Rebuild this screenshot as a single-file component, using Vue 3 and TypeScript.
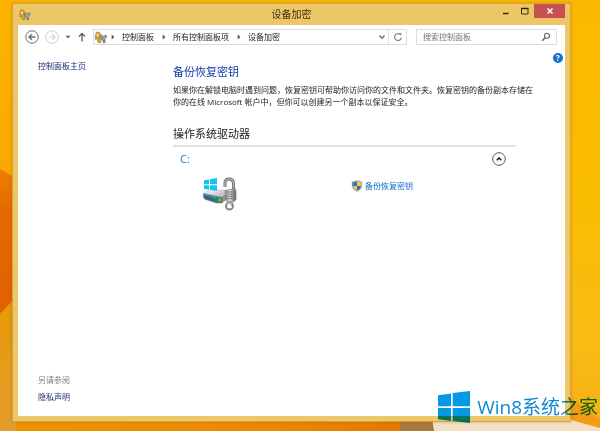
<script setup lang="ts">
import { ref } from 'vue'

const crumbs: string[] = ['控制面板', '所有控制面板项', '设备加密']
const query = ref('')
const expanded = ref(true)
</script>

<template>
  <div class="desktop">
    <svg class="wallpaper" viewBox="0 0 600 431" preserveAspectRatio="none" aria-hidden="true">
      <defs>
        <linearGradient id="base" x1="0" y1="0" x2="0" y2="1">
          <stop offset="0" stop-color="#fbb800" />
          <stop offset="0.45" stop-color="#fbbd00" />
          <stop offset="0.8" stop-color="#f9bb14" />
          <stop offset="1" stop-color="#f6ae16" />
        </linearGradient>
        <linearGradient id="left" x1="0" y1="0" x2="0" y2="1">
          <stop offset="0" stop-color="#fdb400" />
          <stop offset="1" stop-color="#f9a602" />
        </linearGradient>
        <linearGradient id="flame" x1="0" y1="0" x2="0" y2="1">
          <stop offset="0" stop-color="#ee7d00" />
          <stop offset="0.3" stop-color="#e66a00" />
          <stop offset="1" stop-color="#e05f04" />
        </linearGradient>
        <linearGradient id="low" x1="0" y1="0" x2="0" y2="1">
          <stop offset="0" stop-color="#e89a06" />
          <stop offset="1" stop-color="#e49c2c" />
        </linearGradient>
        <linearGradient id="floor" x1="0" y1="0" x2="1" y2="0">
          <stop offset="0" stop-color="#ee9300" />
          <stop offset="0.6" stop-color="#ec8a00" />
          <stop offset="1" stop-color="#e57800" />
        </linearGradient>
      </defs>
      <path d="M0 0H600V431H0Z" fill="url(#base)" />
      <path d="M0 0H16V210H0Z" fill="url(#left)" />
      <path d="M0 169L16 178V300L0 314Z" fill="url(#flame)" />
      <path d="M0 314L16 297V431H0Z" fill="url(#low)" />
      <path d="M16 418H402V431H16Z" fill="url(#floor)" />
      <path d="M399 418H436V431H401Z" fill="#a8783c" />
      <path d="M432 418H571L600 427V431H434Z" fill="#f3dfc4" />
      <path d="M571 398L600 420V428L571 420Z" fill="#f39b12" />
    </svg>

    <svg class="symbols" aria-hidden="true">
      <symbol id="keys" viewBox="0 0 14 14">
        <path d="M2 1.5C3.6.4 6 1.2 6.3 3.2L6 6.5 7 12 5.5 13 4.6 11.8 3.8 12.6 3 8 1.2 9.5.8 5Z" fill="#d7a035" stroke="#8f7133" stroke-width=".6" />
        <path d="M2.2 3.2L4.6 2.8V5.4L2.4 5.8Z" fill="#f6dc7c" />
        <path d="M6 5.5L8 4 9.6 5.8 12.2 4.2 13.4 6.2 11.4 8.4 11.6 12.4 9.7 13 8.6 9.8 6.8 8.7Z" fill="#878c88" stroke="#64706f" stroke-width=".5" />
        <path d="M7.6 5.8L9 7.2M10.8 6.2L9.8 9.6" stroke="#d0dce0" stroke-width=".8" />
        <path d="M10.8 5.2L12.7 5.1 12.2 7Z" fill="#5a92ba" />
      </symbol>
    </svg>

    <main class="window">
      <header class="titlebar">
        <svg class="app-icon"><use href="#keys" /></svg>
        <h1>设备加密</h1>
        <div class="controls">
          <button class="control" type="button" aria-label="最小化">
            <svg viewBox="0 0 10 10"><path d="M2 7.5H7.5" stroke="#2e2614" stroke-width="1.5" /></svg>
          </button>
          <button class="control" type="button" aria-label="最大化">
            <svg viewBox="0 0 10 10"><path d="M1.5 2.5H8V8H1.5Z" fill="none" stroke="#3c321b" /><path d="M1 2.5H8.5" stroke="#2e2614" stroke-width="1.5" /></svg>
          </button>
          <button class="control close" type="button" aria-label="关闭">
            <svg viewBox="0 0 10 10"><path d="M2.5 2.5L7.5 7.5M7.5 2.5L2.5 7.5" stroke="#fff" stroke-width="1.5" /></svg>
          </button>
        </div>
      </header>

      <div class="client">
        <nav class="navbar" aria-label="导航">
          <button class="round" type="button" aria-label="后退">
            <svg viewBox="0 0 14 14" fill="none" stroke="#6b6b6b"><circle cx="7" cy="7" r="6.2" /><path d="M10.4 7H4M6.8 4.2L4 7 6.8 9.8" stroke-width="1.4" /></svg>
          </button>
          <button class="round" type="button" aria-label="前进" disabled>
            <svg viewBox="0 0 14 14" fill="none" stroke="#cfcfcf"><circle cx="7" cy="7" r="6.2" /><path d="M3.6 7H10M7.2 4.2L10 7 7.2 9.8" stroke-width="1.2" /></svg>
          </button>
          <button class="recent" type="button" aria-label="最近的位置">
            <svg viewBox="0 0 6 6"><path d="M.5 1.8H5.5L3 4.6Z" fill="#666" /></svg>
          </button>
          <button class="up" type="button" aria-label="上移">
            <svg viewBox="0 0 10 10" fill="none" stroke="#5c5c5c" stroke-width="1.3"><path d="M5 9.5V1.5M2 4.5L5 1.4 8 4.5" /></svg>
          </button>
          <div class="address">
            <svg class="address-icon"><use href="#keys" /></svg>
            <ol class="crumbs">
              <li v-for="crumb in crumbs" :key="crumb">
                <svg class="arrow" viewBox="0 0 4 6"><path d="M.7.6L3.4 3 .7 5.4Z" fill="#555" /></svg>
                <a href="#">{{ crumb }}</a>
              </li>
            </ol>
            <button class="drop" type="button" aria-label="以前的位置">
              <svg viewBox="0 0 8 8"><path d="M1.5 2.5L4 5.3 6.5 2.5" fill="none" stroke="#6a6a6a" stroke-width="1.3" /></svg>
            </button>
            <button class="refresh" type="button" aria-label="刷新">
              <svg viewBox="0 0 10 10"><path d="M7.1 2.4A3.4 3.4 0 1 0 8.4 5.6" fill="none" stroke="#777" stroke-width="1.1" /><path d="M5.6 1H8.2V3.7Z" fill="#777" /></svg>
            </button>
          </div>
          <label class="search">
            <input v-model="query" type="search" placeholder="搜索控制面板" aria-label="搜索控制面板" />
            <svg viewBox="0 0 10 10" fill="none" stroke="#666"><circle cx="6" cy="3.8" r="2.5" stroke-width="1.1" /><path d="M4.2 5.7L1.2 8.8" stroke-width="1.5" /></svg>
          </label>
        </nav>

        <div class="body">
          <aside class="sidebar">
            <a href="#">控制面板主页</a>
            <div class="related">
              <h2>另请参阅</h2>
              <a href="#">隐私声明</a>
            </div>
          </aside>

          <section class="content">
            <h2 class="heading">备份恢复密钥</h2>
            <p class="intro">
              如果你在解锁电脑时遇到问题，恢复密钥可帮助你访问你的文件和文件夹。恢复密钥的备份副本存储在<br />你的在线 Microsoft 帐户中，但你可以创建另一个副本以保证安全。
            </p>
            <h3 class="group">操作系统驱动器</h3>
            <div class="drive-head">
              <span>C:</span>
              <button class="round" type="button" aria-label="折叠" :aria-expanded="expanded" @click="expanded = !expanded">
                <svg viewBox="0 0 14 14" fill="none"><circle cx="7" cy="7" r="6.3" stroke="#555" /><path d="M4.8 8.2L7 6 9.2 8.2" stroke="#222" stroke-width="1.6" /></svg>
              </button>
            </div>
            <div v-if="expanded" class="drive">
              <svg class="drive-icon" viewBox="0 0 34 34">
                <defs>
                  <linearGradient id="top" x1="0" y1="0" x2="1" y2="1">
                    <stop offset="0" stop-color="#fafafa" />
                    <stop offset="1" stop-color="#989898" />
                  </linearGradient>
                  <linearGradient id="front" x1="0" y1="0" x2="1" y2="0">
                    <stop offset="0" stop-color="#345a78" />
                    <stop offset="0.5" stop-color="#25727f" />
                    <stop offset="0.8" stop-color="#2f8a55" />
                    <stop offset="1" stop-color="#51585b" />
                  </linearGradient>
                  <linearGradient id="lock" x1="0" y1="0" x2="1" y2="0">
                    <stop offset="0" stop-color="#858585" />
                    <stop offset="0.4" stop-color="#e0e0e0" />
                    <stop offset="1" stop-color="#6d6d6d" />
                  </linearGradient>
                </defs>
                <path d="M1 16.5L7 12.8 27 13.5 20 20 19 25 1.5 20.5Z" fill="url(#top)" stroke="#aaa" stroke-width=".4" />
                <path d="M.5 16.5L19 20.5V26L13.5 26 2 22.3.5 20Z" fill="url(#front)" stroke="#73858e" stroke-width=".6" />
                <path d="M1.5 17.8L13 20.5" stroke="#86aabd" stroke-width=".7" />
                <path d="M15.7 21L17.6 21.5V24.8L15.7 24.5Z" fill="#70d64b" />
                <path d="M19 20L25 15V22L19 26Z" fill="#8f8f8f" />
                <path d="M1 3.3L6 2.4V7.2H1ZM7 2.2L14 1V7.2H7ZM1 8.2H6V12.6L1 12ZM7 8.2H14V13.8L7 12.8Z" fill="#12c5f4" />
                <path d="M22 10V6Q22 2 26 2T30.5 6V12" fill="none" stroke="#747474" stroke-width="3" />
                <path d="M22 10V6Q22 2 26 2T30.5 6V12" fill="none" stroke="#b5b5b5" stroke-width="1.2" />
                <path d="M22 13.5L32 11.5 33 14V23L30 25H24Z" fill="url(#lock)" stroke="#6d6d6d" stroke-width=".6" />
                <path d="M24 15H32M24 17.2H32M24 19.4H32M24 21.6H32" stroke="#666" stroke-width=".8" />
                <circle cx="26.5" cy="29" r="3.5" fill="none" stroke="#858585" stroke-width="2" />
                <path d="M23 26.5L28.5 25.5V29" fill="none" stroke="#aaa" stroke-width="1.4" />
              </svg>
              <a class="action" href="#">
                <svg viewBox="0 0 12 12">
                  <path d="M6 .3L11.2 1.7V5.5Q11 9.4 6 11.8Q1 9.4.8 5.5V1.7Z" fill="#9da4a8" />
                  <path d="M6 1.4V6H1.8V2.5Z" fill="#2b79cf" />
                  <path d="M6 1.4L10.2 2.5V6H6Z" fill="#f7cd35" />
                  <path d="M1.9 6H6V10.6Q2.4 8.9 1.9 6Z" fill="#f5c52c" />
                  <path d="M6 6H10.1Q9.6 8.9 6 10.6Z" fill="#2672c5" />
                </svg>
                <span>备份恢复密钥</span>
              </a>
            </div>
          </section>

          <button class="help" type="button" aria-label="帮助">?</button>
        </div>
      </div>
    </main>

    <div class="watermark">
      <svg viewBox="0 0 32 32" aria-hidden="true"><path d="M0 4.2L13 2.4V15.3H0ZM14.7 2.1L32 0V15.3H14.7ZM0 17H13V29.9L0 28.2ZM14.7 17H32V32L14.7 30Z" fill="#0598e6" /></svg>
      <span>Win8系统之家</span>
    </div>
  </div>
</template>

<style>
body {
  margin: 0;
}
</style>

<style scoped>
* {
  box-sizing: border-box;
}

.desktop {
  position: relative;
  display: flex;
  min-height: 100vh;
  padding: 3px 29px 9px 12px;
  isolation: isolate;
  font-family: "Open Sans", "Noto Sans CJK SC", sans-serif;
  font-size: 8px;
  line-height: 12px;
  color: #222;
}

.wallpaper {
  position: absolute;
  inset: 0;
  z-index: -1;
  width: 100%;
  height: 100%;
}

.symbols {
  position: absolute;
  width: 0;
  height: 0;
}

svg {
  display: block;
  flex: none;
}

h1,
h2,
h3,
p,
ol {
  margin: 0;
  padding: 0;
  font-weight: 400;
  font-size: inherit;
}

a {
  color: inherit;
  text-decoration: none;
}

button {
  display: flex;
  align-items: center;
  justify-content: center;
  flex: none;
  padding: 0;
  border: 0;
  background: none;
  font: inherit;
}

.window {
  display: flex;
  flex: 1;
  flex-direction: column;
  min-width: 0;
  padding: 0 5px 5px;
  border: 1px solid #d5a443;
  background: #edc667;
  box-shadow: 0 0 3px rgba(140, 80, 0, 0.35);
}

.titlebar {
  display: grid;
  grid-template-columns: 1fr auto 1fr;
  height: 21px;
}

.app-icon {
  align-self: center;
  width: 12px;
  height: 12px;
  margin-left: 1px;
}

.titlebar h1 {
  font-size: 10px;
  line-height: 20px;
  color: #3c2f12;
}

.controls {
  display: flex;
  justify-content: flex-end;
}

.control {
  width: 19px;
  height: 14px;
}

.control svg {
  width: 10px;
  height: 10px;
}

.control.close {
  width: 31px;
  background: #c75050;
}

.client {
  display: flex;
  flex: 1;
  flex-direction: column;
  background: #fff;
}

.navbar {
  display: flex;
  align-items: center;
  gap: 6px;
  padding: 4px 8px 0 7px;
}

.round,
.round svg {
  width: 14px;
  height: 14px;
}

.recent svg {
  width: 6px;
  height: 6px;
}

.up svg {
  width: 10px;
  height: 10px;
}

.address,
.search {
  display: flex;
  align-items: center;
  height: 16px;
  border: 1px solid #dcdcdc;
}

.address {
  flex: 1;
}

.address-icon {
  width: 14px;
  height: 13px;
}

.crumbs {
  display: flex;
  flex: 1;
  gap: 8px;
  margin-left: 3px;
  list-style: none;
}

.crumbs li {
  display: flex;
  align-items: center;
  gap: 7px;
  white-space: nowrap;
}

.arrow {
  width: 4px;
  height: 6px;
}

.drop {
  width: 12px;
}

.drop svg {
  width: 8px;
  height: 8px;
}

.refresh {
  width: 18px;
  height: 14px;
  border-left: 1px solid #e2e2e2;
}

.refresh svg {
  width: 10px;
  height: 10px;
}

.search {
  flex: 0 0 141px;
  margin-left: 3px;
  padding: 0 5px 0 6px;
}

.search input {
  flex: 1;
  min-width: 0;
  padding: 0;
  border: 0;
  outline: 0;
  background: none;
  font: inherit;
  color: #333;
}

.search input::placeholder {
  color: #767676;
  opacity: 1;
}

.search svg {
  width: 10px;
  height: 10px;
}

.body {
  display: flex;
  flex: 1;
}

.sidebar {
  display: flex;
  flex: 0 0 155px;
  flex-direction: column;
  justify-content: space-between;
  padding: 15px 0 13px 20px;
  color: #1c2a6e;
}

.related {
  display: flex;
  flex-direction: column;
  gap: 5px;
}

.related h2 {
  color: #808080;
}

.content {
  flex: 1;
  min-width: 0;
  padding-top: 19px;
}

.heading {
  font-size: 11px;
  line-height: 16px;
  color: #0f3cab;
}

.intro {
  margin-top: 4px;
  white-space: nowrap;
}

.group {
  max-width: 343px;
  margin-top: 18px;
  padding-bottom: 3px;
  border-bottom: 2px solid #e2e2e2;
  font-size: 11px;
  line-height: 16px;
}

.drive-head {
  display: flex;
  align-items: center;
  justify-content: space-between;
  max-width: 343px;
  margin-top: 5px;
  padding: 0 10px 0 7px;
  font-size: 11px;
  line-height: 14px;
  color: #2474cf;
}

.drive {
  display: grid;
  grid-template-columns: 148px 1fr;
  align-items: start;
  margin-top: 11px;
  padding-left: 30px;
}

.drive-icon {
  width: 34px;
  height: 34px;
}

.action {
  display: flex;
  align-items: center;
  gap: 2px;
  margin-top: 3px;
  color: #0f68cc;
}

.action svg {
  width: 12px;
  height: 12px;
}

.help {
  width: 10px;
  height: 10px;
  margin: 8px 2px 0 0;
  border-radius: 50%;
  background: #1272c9;
  color: #fff;
  font-weight: 700;
  line-height: 10px;
}

.watermark {
  position: absolute;
  right: 2px;
  bottom: 8px;
  display: flex;
  align-items: center;
  gap: 7px;
  mix-blend-mode: multiply;
  font-size: 19px;
  line-height: 32px;
  color: #0c8bd2;
  white-space: nowrap;
}

.watermark svg {
  width: 32px;
  height: 32px;
}
</style>
